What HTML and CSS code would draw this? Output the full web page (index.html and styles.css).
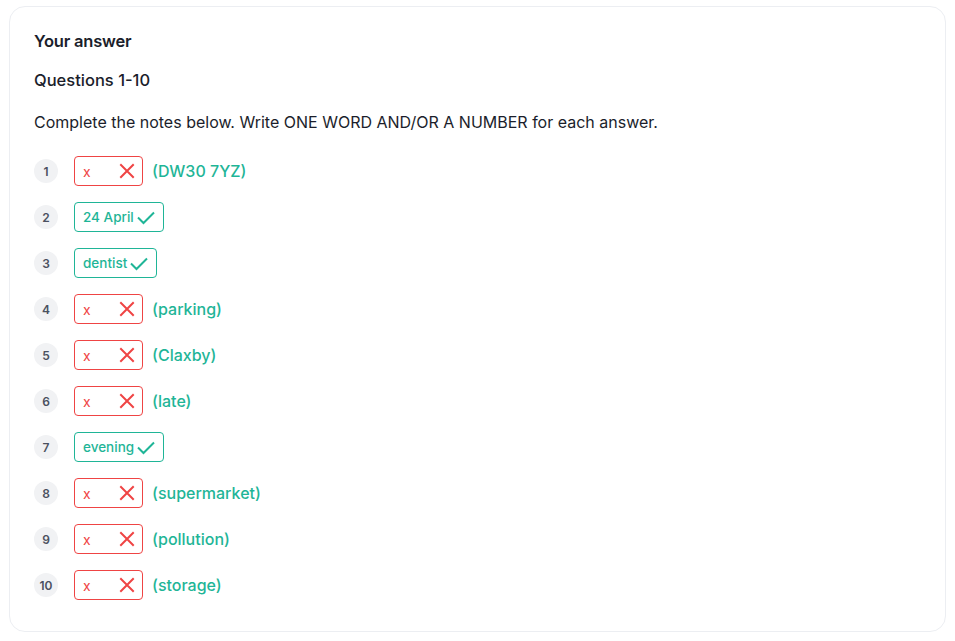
FILE: index.html
```html
<!DOCTYPE html>
<html lang="en">
<head>
<meta charset="utf-8">
<title>Your answer</title>
<link rel="stylesheet" href="styles.css">
</head>
<body>
<div class="card">
  <h2 class="title">Your answer</h2>
  <p class="subtitle">Questions 1-10</p>
  <p class="instr">Complete the notes below. Write ONE WORD AND/OR A NUMBER for each answer.</p>
  <ol class="list">
    <li class="row"><span class="num">1</span><span class="box wrong"><span class="val">x</span><svg class="ix" viewBox="0 0 16 16"><path d="M2 2L14 14M14 2L2 14"/></svg></span><span class="correct">(DW30 7YZ)</span></li>
    <li class="row"><span class="num">2</span><span class="box right"><span class="val">24 April</span><svg class="ic" viewBox="0 0 20 20"><path d="M2 10.5L7.5 16L18 5.5"/></svg></span></li>
    <li class="row"><span class="num">3</span><span class="box right"><span class="val">dentist</span><svg class="ic" viewBox="0 0 20 20"><path d="M2 10.5L7.5 16L18 5.5"/></svg></span></li>
    <li class="row"><span class="num">4</span><span class="box wrong"><span class="val">x</span><svg class="ix" viewBox="0 0 16 16"><path d="M2 2L14 14M14 2L2 14"/></svg></span><span class="correct">(parking)</span></li>
    <li class="row"><span class="num">5</span><span class="box wrong"><span class="val">x</span><svg class="ix" viewBox="0 0 16 16"><path d="M2 2L14 14M14 2L2 14"/></svg></span><span class="correct">(Claxby)</span></li>
    <li class="row"><span class="num">6</span><span class="box wrong"><span class="val">x</span><svg class="ix" viewBox="0 0 16 16"><path d="M2 2L14 14M14 2L2 14"/></svg></span><span class="correct">(late)</span></li>
    <li class="row"><span class="num">7</span><span class="box right"><span class="val">evening</span><svg class="ic" viewBox="0 0 20 20"><path d="M2 10.5L7.5 16L18 5.5"/></svg></span></li>
    <li class="row"><span class="num">8</span><span class="box wrong"><span class="val">x</span><svg class="ix" viewBox="0 0 16 16"><path d="M2 2L14 14M14 2L2 14"/></svg></span><span class="correct">(supermarket)</span></li>
    <li class="row"><span class="num">9</span><span class="box wrong"><span class="val">x</span><svg class="ix" viewBox="0 0 16 16"><path d="M2 2L14 14M14 2L2 14"/></svg></span><span class="correct">(pollution)</span></li>
    <li class="row"><span class="num">10</span><span class="box wrong"><span class="val">x</span><svg class="ix" viewBox="0 0 16 16"><path d="M2 2L14 14M14 2L2 14"/></svg></span><span class="correct">(storage)</span></li>
  </ol>
</div>
</body>
</html>
```
FILE: styles.css
```css
html, body {
  margin: 0;
  background: #ffffff;
}
body {
  padding: 6px 9px 0 9px;
  font-family: Inter, "Liberation Sans", sans-serif;
  color: #1b1e2b;
}
.card {
  box-sizing: border-box;
  width: 937px;
  height: 626px;
  border: 1px solid #eceef2;
  border-radius: 16px;
  padding: 22px 24px;
}
.title {
  margin: 0;
  font-size: 16.5px;
  line-height: 24px;
  font-weight: 600;
  letter-spacing: -0.2px;
}
.subtitle {
  margin: 16px 0 0 0;
  font-size: 16.5px;
  line-height: 22px;
  font-weight: 500;
}
.instr {
  margin: 20px 0 0 0;
  font-size: 16px;
  line-height: 22px;
  font-weight: 400;
}
.list {
  list-style: none;
  margin: 23px 0 0 0;
  padding: 0;
  display: flex;
  flex-direction: column;
  gap: 16px;
}
.row {
  display: flex;
  align-items: center;
  height: 30px;
}
.num {
  width: 24px;
  height: 24px;
  border-radius: 50%;
  background: #f1f2f4;
  color: #4b5160;
  font-size: 12px;
  font-weight: 600;
  display: flex;
  align-items: center;
  justify-content: center;
  margin-right: 16px;
}
.box {
  box-sizing: border-box;
  height: 30px;
  border: 1px solid;
  border-radius: 4px;
  display: flex;
  align-items: center;
  padding: 0 7px 0 8px;
  gap: 2px;
  font-size: 13.5px;
}
.wrong {
  border-color: #ef4444;
  color: #ef4444;
}
.wrong .val {
  min-width: 34px;
  font-size: 14px;
}
.right {
  border-color: #1fb597;
  color: #1fb597;
  font-weight: 500;
}
.ix {
  width: 16px;
  height: 16px;
  fill: none;
  stroke: #ef4444;
  stroke-width: 2;
  stroke-linecap: square;
}
.ic {
  width: 20px;
  height: 20px;
  fill: none;
  stroke: #1fb597;
  stroke-width: 2;
}
.correct {
  margin-left: 9px;
  color: #1fb597;
  font-size: 16px;
  font-weight: 500;
}
```
